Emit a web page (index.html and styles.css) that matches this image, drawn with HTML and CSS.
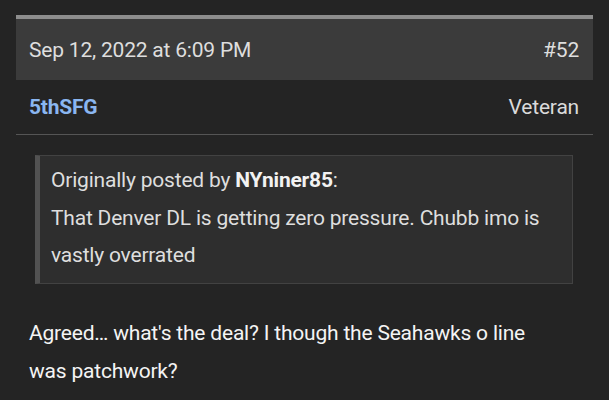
FILE: index.html
```html
<!DOCTYPE html>
<html>
<head>
<meta charset="utf-8">
<link rel="stylesheet" href="styles.css">
</head>
<body>
<div class="post">
  <div class="post-head">
    <span class="date">Sep 12, 2022 at 6:09 PM</span>
    <span class="num">#52</span>
  </div>
  <div class="author-row">
    <span class="author">5thSFG</span>
    <span class="rank">Veteran</span>
  </div>
  <div class="quote">
    <div class="quote-by">Originally posted by <b>NYniner85</b>:</div>
    <div class="quote-text">That Denver DL is getting zero pressure. Chubb imo is vastly overrated</div>
  </div>
  <div class="body-text">Agreed… what's the deal? I though the Seahawks o line was patchwork?</div>
</div>
</body>
</html>
```
FILE: styles.css
```css
html, body {
  margin: 0;
  background: #242424;
}
body {
  font-family: Roboto, "Noto Sans", sans-serif;
  font-size: 21px;
  letter-spacing: -0.2px;
  color: #dedede;
}
.post {
  padding: 15px 16px 0 16px;
}
.post-head {
  display: flex;
  justify-content: space-between;
  align-items: center;
  height: 61px;
  border-top: 4px solid #8d8d8d;
  background: #3b3b3b;
  padding: 0 14px 0 13px;
}
.author-row {
  display: flex;
  justify-content: space-between;
  align-items: center;
  height: 54px;
  border-bottom: 1px solid #555;
  padding: 0 14px 0 13px;
}
.author {
  color: #8ab6f0;
  font-weight: 700;
}
.rank {
  color: #dadada;
}
.quote {
  margin: 20px 20px 0 19px;
  background: #2e2e2e;
  border: 1px solid #424242;
  border-left: 5px solid #525252;
  padding: 6px 20px 8px 11px;
  line-height: 37.5px;
}
.quote-by b {
  color: #f2f2f2;
  font-weight: 700;
}
.body-text {
  margin-top: 30px;
  padding: 0 30px 0 13px;
  line-height: 38px;
  color: #f4f4f4;
}
```
